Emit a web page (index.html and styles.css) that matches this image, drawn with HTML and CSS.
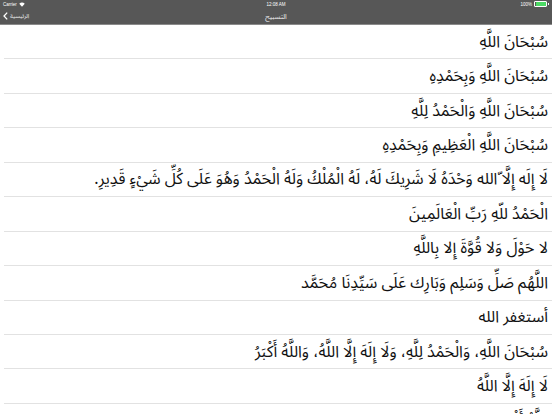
FILE: index.html
```html
<!DOCTYPE html>
<html lang="ar">
<head>
<meta charset="utf-8">
<link rel="stylesheet" href="styles.css">
</head>
<body>
<header class="top">
  <div class="status">
    <div class="st-left">Carrier
      <svg class="wifi" width="6" height="5" viewBox="0 0 12 9"><path d="M6 9 L0.5 3 A8 8 0 0 1 11.5 3 Z" fill="#fff"/></svg>
    </div>
    <div class="st-mid">12:08 AM</div>
    <div class="st-right">100%
      <span class="batt"><span class="batt-fill"></span></span><span class="batt-tip"></span>
    </div>
  </div>
  <nav class="navbar">
    <div class="back">
      <svg class="chev" width="5" height="8" viewBox="0 0 5 8"><path d="M4.2 0.6 L1 4 L4.2 7.4" fill="none" stroke="#fff" stroke-width="1.3"/></svg>
      <span class="back-label">الرئيسية</span>
    </div>
    <div class="title">التسبيح</div>
  </nav>
</header>
<ul class="list" dir="rtl">
  <li class="row">سُبْحَانَ اللَّهِ</li>
  <li class="row">سُبْحَانَ اللَّهِ وَبِحَمْدِهِ</li>
  <li class="row">سُبْحَانَ اللَّهِ وَالْحَمْدُ لِلَّهِ</li>
  <li class="row">سُبْحَانَ اللَّهِ الْعَظِيمِ وَبِحَمْدِهِ</li>
  <li class="row">لَا إِلَه إِلَّا ّالله وَحْدَهُ لَا شَرِيكَ لَهُ، لَهُ الْمُلْكُ وَلَهُ الْحَمْدُ وَهُوَ عَلَى كُلِّ شَيْءٍ قَدِيرِ.</li>
  <li class="row">الْحَمْدُ للّهِ رَبِّ الْعَالَمِينَ</li>
  <li class="row">لا حَوْلَ وَلا قُوَّةَ إِلا بِاللَّهِ</li>
  <li class="row">اللَّهُم صَلِّ وَسَلِم وَبَارِك عَلَى سَيِّدِنَا مُحَمَّد</li>
  <li class="row">أستغفر الله</li>
  <li class="row">سُبْحَانَ اللَّهِ، وَالْحَمْدُ لِلَّهِ، وَلَا إِلَهَ إِلَّا اللَّهُ، وَاللَّهُ أَكْبَرُ</li>
  <li class="row">لَا إِلَهَ إِلَّا اللَّهُ</li>
  <li class="row">اللَّهُ أَكْبَرُ</li>
</ul>
</body>
</html>
```
FILE: styles.css
```css
html, body {
  margin: 0;
  padding: 0;
  background: #ffffff;
  overflow: hidden;
  height: 414px;
}
body {
  font-family: "Noto Sans Arabic", "Noto Naskh Arabic", "DejaVu Sans", sans-serif;
}
.top {
  background: #575757;
  height: 24px;
  border-bottom: 1px solid #8a8a8a;
  color: #fff;
  font-family: "Liberation Sans", Arial, sans-serif;
}
.status {
  height: 8px;
  display: flex;
  align-items: center;
  justify-content: space-between;
  font-size: 4.5px;
  padding: 0 3px;
  position: relative;
}
.st-left, .st-right {
  display: flex;
  align-items: center;
  gap: 2px;
}
.st-mid {
  position: absolute;
  left: 0;
  right: 0;
  text-align: center;
}
.batt {
  width: 10px;
  height: 3.5px;
  border: 0.5px solid #fff;
  border-radius: 1px;
  padding: 0.5px;
  display: inline-flex;
}
.batt-fill {
  flex: 1;
  background: #4cd964;
  border-radius: 0.5px;
}
.batt-tip {
  width: 1px;
  height: 2px;
  background: #fff;
  margin-left: -1px;
}
.navbar {
  height: 16px;
  display: flex;
  align-items: center;
  position: relative;
}
.back {
  display: flex;
  align-items: center;
  gap: 2px;
  padding-left: 3px;
  font-family: "Noto Sans Arabic", "DejaVu Sans", sans-serif;
  font-size: 6px;
  color: #e6e6e6;
}
.title {
  position: absolute;
  left: 0;
  right: 0;
  text-align: center;
  font-family: "Noto Sans Arabic", "DejaVu Sans", sans-serif;
  font-size: 7px;
  color: #ececec;
  pointer-events: none;
}
.list {
  list-style: none;
  margin: 0;
  padding: 0;
}
.row {
  height: 33.45px;
  margin-left: 4px;
  padding-right: 4px;
  border-bottom: 1px solid #e2e2e2;
  display: flex;
  align-items: center;
  font-size: 16px;
  color: #111;
  white-space: nowrap;
}
```
